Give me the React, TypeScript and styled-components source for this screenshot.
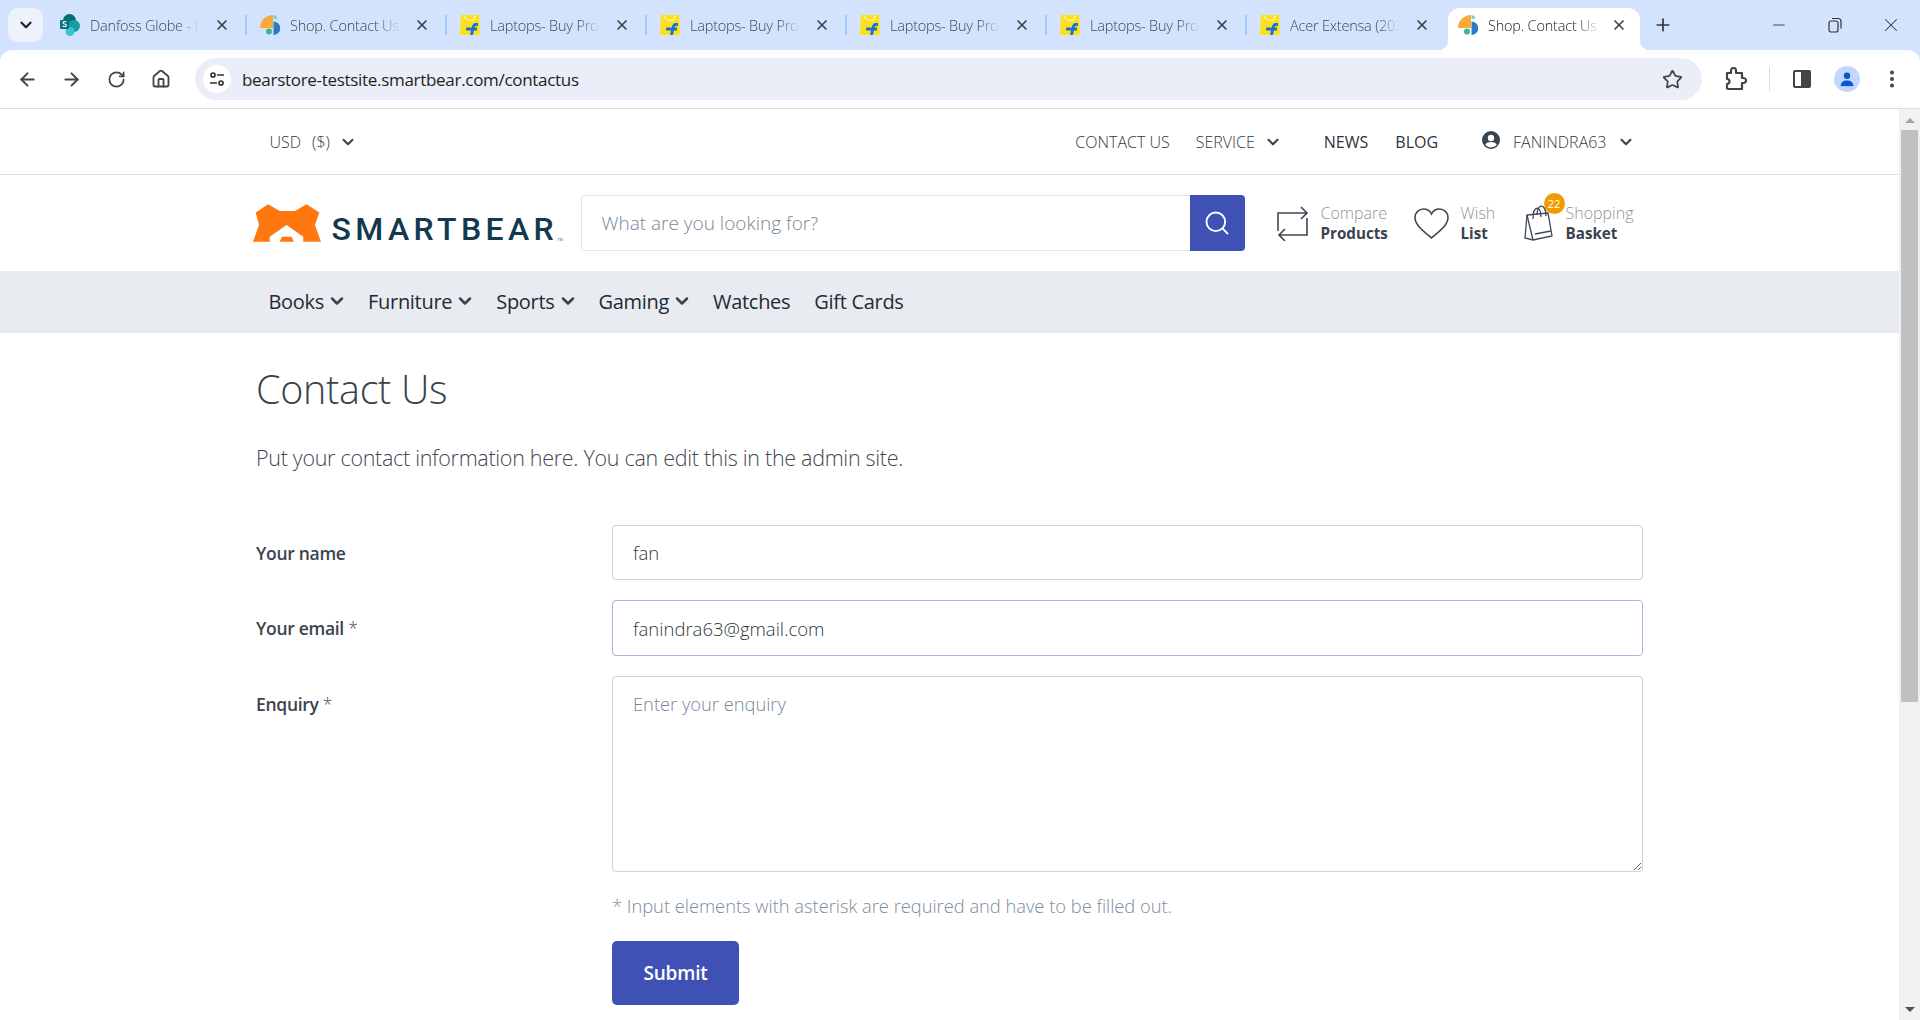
import React from 'react'
import styled, { createGlobalStyle } from 'styled-components'
import { ArrowLeft, ArrowRight, ChevronDown, EllipsisVertical, House, Minus, Plus, RotateCw, Search, Star, X } from 'lucide-react'

const font = `"Open Sans", "Noto Sans", sans-serif`

const GlobalStyle = createGlobalStyle`
  html, body { margin: 0; padding: 0; height: 100%; overflow: hidden; background: #d3e3fd; }
  * { box-sizing: border-box; }
  body { font-family: ${font}; color: #3a444e; }
`

const SharePointIcon = () => (
  <svg width="20" height="22" viewBox="0 0 20 22">
    <circle cx="9.500" cy="6.500" r="6.500" fill="#036c70" />
    <circle cx="14" cy="12" r="6" fill="#1a9ba1" />
    <circle cx="10" cy="17.500" r="4.500" fill="#37c6d0" />
    <rect x="0" y="6" width="9" height="9" rx="1" fill="#03787c" />
    <path d="M6.300 8c-1-.7-3.300-.7-3.300.7 0 1.600 3.400.9 3.400 2.700 0 1.400-2.500 1.400-3.700.7" fill="none" stroke="#fff" strokeWidth="1.100" />
  </svg>
)

const ShopIcon = () => (
  <svg width="20" height="20" viewBox="0 0 20 20">
    <path d="M0 13A13 13 0 0 1 13 0v13z" fill="#f9a93a" />
    <path d="M13.500 0c2 .3 3.500 1.500 4 3.500l-4 .5z" fill="#6fcfd0" />
    <path d="M13.500 6.500a6.700 6.700 0 0 1 0 13.500z" fill="#2f7cc4" />
    <circle cx="9" cy="16.500" r="3" fill="#3fb58a" />
  </svg>
)

const FlipkartIcon = () => (
  <svg width="20" height="20" viewBox="0 0 20 20">
    <path d="M1 0h18l1 20H0z" fill="#ffe11b" />
    <path d="M5 1c.5 6 9.500 6 10 0" fill="none" stroke="#fff6b0" strokeWidth="1.300" />
    <path d="M11.500 20l2-9c.3-1.200 1-1.500 2-1.500H18M6 14h11" fill="none" stroke="#1a6fd6" strokeWidth="2.800" />
  </svg>
)

const BearLogo = () => (
  <svg width="68" height="38" viewBox="40 283 203 112">
    <path
      fillRule="evenodd"
      fill="#ff770f"
      d="M40 395L58 345L48 308L85 283L120 303H165L200 283L238 308L225 345L243 395H190V380L140 345L90 380V395ZM120 395L126 380H155L162 395Z"
    />
  </svg>
)

const tabs = [
  { title: 'Danfoss Globe - Home', icon: <SharePointIcon /> },
  { title: 'Shop. Contact Us', icon: <ShopIcon /> },
  { title: 'Laptops- Buy Products', icon: <FlipkartIcon /> },
  { title: 'Laptops- Buy Products', icon: <FlipkartIcon /> },
  { title: 'Laptops- Buy Products', icon: <FlipkartIcon /> },
  { title: 'Laptops- Buy Products', icon: <FlipkartIcon /> },
  { title: 'Acer Extensa (2023)', icon: <FlipkartIcon /> },
  { title: 'Shop. Contact Us', icon: <ShopIcon />, active: true },
]

const App = () => {
  return (
    <Screen>
      <GlobalStyle />
      <TabStrip>
        <TabSearch><ChevronDown size={18} strokeWidth={3} /></TabSearch>
        {tabs.map((tab, i) => (
          <Tab key={i} $active={tab.active} $hideSep={i >= 6}>
            {tab.icon}
            <TabTitle $active={tab.active}>{tab.title}</TabTitle>
            <TabClose $active={tab.active}><X size={16} strokeWidth={2.500} /></TabClose>
          </Tab>
        ))}
        <NewTab><Plus size={20} strokeWidth={2} /></NewTab>
        <WindowControls>
          <WinButton><Minus size={18} strokeWidth={1.200} /></WinButton>
          <WinButton>
            <svg width="14" height="16" viewBox="0 0 14 16" fill="none" stroke="#333" strokeWidth="1.200">
              <rect x="1" y="4" width="9" height="11" rx="2" />
              <path d="M4 1.500h6a3 3 0 0 1 3 3v7" />
            </svg>
          </WinButton>
          <WinButton><X size={22} strokeWidth={1.100} /></WinButton>
        </WindowControls>
      </TabStrip>

      <Toolbar>
        <ToolIcon><ArrowLeft size={21} strokeWidth={2.200} /></ToolIcon>
        <ToolIcon><ArrowRight size={21} strokeWidth={2.200} /></ToolIcon>
        <ToolIcon><RotateCw size={19} strokeWidth={2.200} /></ToolIcon>
        <ToolIcon><House size={20} strokeWidth={2.200} /></ToolIcon>
        <AddressBar>
          <SiteInfo>
            <svg width="16" height="16" viewBox="0 0 16 16" fill="none" stroke="#333" strokeWidth="1.700">
              <circle cx="4" cy="4" r="2" />
              <path d="M8 4h7M1 12h7" />
              <circle cx="12" cy="12" r="2" />
            </svg>
          </SiteInfo>
          <Url>bearstore-testsite.smartbear.com/contactus</Url>
          <Star size={21} strokeWidth={2} color="#444" />
        </AddressBar>
        <ToolGroup>
          <ExtIcon>
            <svg width="22" height="24" viewBox="0 0 22 24" fill="none" stroke="#444" strokeWidth="2.200" strokeLinejoin="round">
              <path d="M2 6h4V3.500a2.500 2.500 0 0 1 5 0V6h6v5h1.500a2.500 2.500 0 0 1 0 5H17v6H3a1 1 0 0 1-1-1v-4a2.500 2.500 0 0 0 0-5z" />
            </svg>
          </ExtIcon>
          <ToolDivider />
          <PanelIcon><PanelFill /></PanelIcon>
          <Avatar>
            <svg width="18" height="18" viewBox="0 0 18 18" fill="#0b57d0">
              <circle cx="9" cy="5" r="4" />
              <path d="M1 18c0-4.500 3.500-7 8-7s8 2.500 8 7z" />
            </svg>
          </Avatar>
          <DotsIcon><EllipsisVertical size={22} strokeWidth={2.400} /></DotsIcon>
        </ToolGroup>
      </Toolbar>

      <Viewport>
        <Page>
          <TopBar>
            <TopInner>
              <Currency>USD<span>($)</span><Chevron size={18} strokeWidth={2.800} /></Currency>
              <TopLinks>
                <TopLink>CONTACT US</TopLink>
                <TopLink>SERVICE<Chevron size={18} strokeWidth={2.800} /></TopLink>
                <TopLink $strong>NEWS</TopLink>
                <TopLink $strong>BLOG</TopLink>
                <UserLink>
                  <svg width="18" height="18" viewBox="0 0 18 18">
                    <circle cx="9" cy="9" r="9" fill="#3a444e" />
                    <circle cx="9" cy="7" r="3.200" fill="#fff" />
                    <path d="M3.200 14c1-2.400 3.300-3 5.800-3s4.800.6 5.800 3a8 8 0 0 1-11.600 0z" fill="#fff" />
                  </svg>
                  FANINDRA63
                  <Chevron size={18} strokeWidth={2.800} />
                </UserLink>
              </TopLinks>
            </TopInner>
          </TopBar>

          <Header>
            <Logo>
              <BearLogo />
              <LogoText>SMARTBEAR</LogoText>
              <LogoTm>TM</LogoTm>
            </Logo>
            <SearchBox>
              <SearchInput placeholder="What are you looking for?" />
              <SearchButton><Search size={28} strokeWidth={1.600} /></SearchButton>
            </SearchBox>
            <ToolLinks>
              <ToolLink $width={137}>
                <svg width="32" height="36" viewBox="0 0 32 36" fill="none" stroke="#3f4953" strokeWidth="1.600">
                  <path d="M1 26V8h29M24 2l6 6-6 6M30 13v17H2M8 24l-6 6 6 6" />
                </svg>
                <ToolText><small>Compare</small><b>Products</b></ToolText>
              </ToolLink>
              <ToolLink $width={110}>
                <svg width="35" height="31" viewBox="0 0 35 31" fill="none" stroke="#3f4953" strokeWidth="1.600">
                  <path d="M17.500 30C12 25 1 18 1 9.500 1 4.500 5 1 9.500 1c3.500 0 6.500 2 8 5 1.500-3 4.500-5 8-5C30 1 34 4.500 34 9.500 34 18 23 25 17.500 30z" />
                </svg>
                <ToolText><small>Wish</small><b>List</b></ToolText>
              </ToolLink>
              <ToolLink $width={112}>
                <BagWrap>
                  <svg width="30" height="36" viewBox="0 0 30 36" fill="none" stroke="#3f4953" strokeWidth="1.300">
                    <path d="M3 10l21-2 4 23-19 4-8-2z" />
                    <path d="M9 35L3 10M9 14c0-14 8-14 8-2M13 10c0-12 9-12 9 1M11 29l16-3" />
                  </svg>
                  <Badge>22</Badge>
                </BagWrap>
                <ToolText><small>Shopping</small><b>Basket</b></ToolText>
              </ToolLink>
            </ToolLinks>
          </Header>

          <NavBar>
            <NavInner>
              <NavItem>Books<Chevron size={20} strokeWidth={3} /></NavItem>
              <NavItem>Furniture<Chevron size={20} strokeWidth={3} /></NavItem>
              <NavItem>Sports<Chevron size={20} strokeWidth={3} /></NavItem>
              <NavItem>Gaming<Chevron size={20} strokeWidth={3} /></NavItem>
              <NavItem>Watches</NavItem>
              <NavItem>Gift Cards</NavItem>
            </NavInner>
          </NavBar>

          <Content>
            <Title>Contact Us</Title>
            <Lead>Put your contact information here. You can edit this in the admin site.</Lead>
            <Form>
              <Label>Your name</Label>
              <Field value="fan" readOnly />
              <Label>Your email <em>*</em></Label>
              <Field value="fanindra63@gmail.com" readOnly $focused />
              <Label>Enquiry <em>*</em></Label>
              <AreaField placeholder="Enter your enquiry" />
              <span />
              <FormFoot>
                <Note>* Input elements with asterisk are required and have to be filled out.</Note>
                <Submit>Submit</Submit>
              </FormFoot>
            </Form>
          </Content>
        </Page>
        <Scrollbar>
          <ScrollArrow $up />
          <ScrollThumb />
          <ScrollArrow />
        </Scrollbar>
      </Viewport>
    </Screen>
  )
}

export default App

const Screen = styled.div`
  width: 1920px;
  height: 1020px;
  display: flex;
  flex-direction: column;
  overflow: hidden;
`
const TabStrip = styled.div`
  height: 50px;
  display: flex;
  align-items: flex-end;
  padding-left: 8px;
  background: #d3e3fd;
`
const TabSearch = styled.div`
  width: 35px;
  height: 34px;
  margin: 0 1px 8px 0;
  border-radius: 10px;
  background: #edf2fc;
  display: flex;
  align-items: center;
  justify-content: center;
  color: #222;
`
const Tab = styled.div<{ $active?: boolean; $hideSep?: boolean }>`
  position: relative;
  width: ${p => (p.$active ? '192px' : '200px')};
  height: 42px;
  margin-left: ${p => (p.$active ? '4px' : '0')};
  padding: 0 ${p => (p.$active ? '10px' : '14px')} 8px ${p => (p.$active ? '10px' : '16px')};
  display: flex;
  align-items: center;
  border-radius: 12px 12px 0 0;
  background: ${p => (p.$active ? '#fff' : 'transparent')};
  &::after {
    content: '';
    display: ${p => (p.$active || p.$hideSep ? 'none' : 'block')};
    position: absolute;
    right: -3px;
    top: 7px;
    width: 2px;
    height: 20px;
    background: #a8c7fa;
  }
  ${p => p.$active && `
    &::before {
      content: '';
      position: absolute;
      left: -10px;
      right: -10px;
      bottom: 0;
      height: 10px;
      z-index: 0;
      background:
        radial-gradient(circle at 0 0, #d3e3fd 10px, #fff 10.5px) left / 10px 10px no-repeat,
        radial-gradient(circle at 100% 0, #d3e3fd 10px, #fff 10.5px) right / 10px 10px no-repeat;
    }
  `}
  svg { flex: none; position: relative; }
`
const TabTitle = styled.div<{ $active?: boolean }>`
  position: relative;
  width: 112px;
  margin-left: 10px;
  overflow: hidden;
  white-space: nowrap;
  font-size: 14.500px;
  font-weight: 300;
  letter-spacing: -0.2px;
  color: ${p => (p.$active ? '#1f1f1f' : '#45474a')};
  -webkit-mask-image: linear-gradient(to right, #000 80%, transparent);
  mask-image: linear-gradient(to right, #000 80%, transparent);
`
const TabClose = styled.div<{ $active?: boolean }>`
  position: relative;
  margin-left: ${p => (p.$active ? '11px' : '14px')};
  display: flex;
  color: #3c3f43;
`
const NewTab = styled.div`
  margin: 0 0 15px 13px;
  display: flex;
  color: #333;
`
const WindowControls = styled.div`
  margin-left: auto;
  height: 50px;
  display: flex;
  align-items: center;
  padding: 0 18px 0 0;
  gap: 34px;
  color: #333;
`
const WinButton = styled.div`
  width: 22px;
  display: flex;
  align-items: center;
  justify-content: center;
`
const Toolbar = styled.div`
  height: 59px;
  background: #fff;
  border-bottom: 1px solid #dadce0;
  border-radius: 12px 12px 0 0;
  display: flex;
  align-items: center;
`
const ToolIcon = styled.div`
  width: 44.500px;
  flex: none;
  display: flex;
  justify-content: center;
  color: #444;
  &:first-child { margin-left: 5px; }
`
const AddressBar = styled.div`
  width: 1507px;
  height: 42px;
  margin-left: 12px;
  padding: 0 19px 0 8px;
  border-radius: 21px;
  background: #ebeef8;
  display: flex;
  align-items: center;
`
const SiteInfo = styled.div`
  width: 28px;
  height: 28px;
  border-radius: 50%;
  background: #fff;
  display: flex;
  align-items: center;
  justify-content: center;
`
const Url = styled.div`
  flex: 1;
  margin-left: 11px;
  font-size: 17px;
  letter-spacing: -0.3px;
  color: #1f1f1f;
`
const ToolGroup = styled.div`
  display: flex;
  align-items: center;
`
const ExtIcon = styled.div`
  width: 24px;
  margin-left: 23px;
  display: flex;
`
const ToolDivider = styled.div`
  width: 1px;
  height: 24px;
  margin-left: 20px;
  background: #c7dcfb;
`
const PanelIcon = styled.div`
  width: 18px;
  height: 18px;
  margin-left: 23px;
  border: 2px solid #444;
  border-radius: 2px;
  display: flex;
  justify-content: flex-end;
`
const PanelFill = styled.div`
  width: 8px;
  background: #444;
`
const Avatar = styled.div`
  width: 26px;
  height: 26px;
  margin-left: 23px;
  border-radius: 50%;
  background: #c2d7fa;
  display: flex;
  align-items: center;
  justify-content: center;
  overflow: hidden;
  svg { transform: scale(0.8); }
`
const DotsIcon = styled.div`
  margin-left: 21px;
  display: flex;
  color: #444;
`
const Viewport = styled.div`
  flex: 1;
  min-height: 0;
  display: flex;
  background: #fff;
`
const Page = styled.div`
  width: 1899px;
  background: #fff;
`
const TopBar = styled.div`
  height: 66px;
  border-bottom: 1px solid #dee0e2;
`
const TopInner = styled.div`
  width: 1386px;
  height: 65px;
  margin: 0 auto;
  padding: 0 8px 0 13px;
  display: flex;
  align-items: center;
  justify-content: space-between;
  font-size: 16px;
  font-weight: 300;
  color: #2f3942;
`
const Chevron = styled(ChevronDown)`
  flex: none;
  color: #3a444e;
`
const Currency = styled.div`
  display: flex;
  align-items: center;
  span { margin: 0 9px 0 11px; }
`
const TopLinks = styled.div`
  display: flex;
  align-items: center;
`
const TopLink = styled.div<{ $strong?: boolean }>`
  display: flex;
  align-items: center;
  gap: 9px;
  margin-right: 26px;
  font-weight: ${p => (p.$strong ? 500 : 300)};
  color: ${p => (p.$strong ? '#2b343c' : '#2f3942')};
  &:nth-child(2) { margin-right: 42px; }
  &:nth-child(3) { margin-right: 27px; }
  &:nth-child(4) { margin-right: 44px; }
`
const UserLink = styled.div`
  display: flex;
  align-items: center;
  gap: 13px;
  svg:first-child { margin-top: -3px; }
  svg:last-child { margin-left: -3px; }
`
const Header = styled.div`
  width: 1386px;
  height: 96px;
  margin: 0 auto;
  display: flex;
  align-items: center;
`
const Logo = styled.div`
  width: 325px;
  margin-left: -4px;
  display: flex;
  align-items: flex-end;
  padding-bottom: 1px;
`
const LogoText = styled.div`
  margin-left: 11px;
  font-family: Roboto, sans-serif;
  font-size: 32px;
  line-height: 26px;
  font-weight: 500;
  letter-spacing: 4.400px;
  color: #12394f;
`
const LogoTm = styled.div`
  margin-left: -1px;
  font-size: 4px;
  color: #666;
`
const SearchBox = styled.div`
  width: 664px;
  height: 56px;
  margin-left: 3px;
  display: flex;
`
const SearchInput = styled.input`
  flex: 1;
  min-width: 0;
  padding: 0 20px;
  border: 1px solid #e2e5e9;
  border-right: 0;
  border-radius: 4px 0 0 4px;
  outline: 0;
  font-family: ${font};
  font-size: 19px;
  font-weight: 300;
  &::placeholder { color: #75879a; opacity: 1; }
`
const SearchButton = styled.div`
  width: 55px;
  border-radius: 0 4px 4px 0;
  background: #3f51b5;
  color: #fff;
  display: flex;
  align-items: center;
  justify-content: center;
`
const ToolLinks = styled.div`
  margin-left: 32px;
  display: flex;
  align-items: center;
`
const ToolLink = styled.div<{ $width: number }>`
  width: ${p => p.$width}px;
  display: flex;
  align-items: center;
  gap: 12px;
`
const ToolText = styled.div`
  display: flex;
  flex-direction: column;
  font-size: 15.200px;
  line-height: 20px;
  small { font-size: 16px; font-weight: 300; color: #8f949a; }
  b { font-weight: 700; color: #3a444e; }
`
const BagWrap = styled.div`
  position: relative;
  display: flex;
`
const Badge = styled.div`
  position: absolute;
  top: -12px;
  right: -11px;
  width: 21px;
  height: 21px;
  border-radius: 50%;
  background: #f09c00;
  color: #fff;
  font-size: 11px;
  display: flex;
  align-items: center;
  justify-content: center;
`
const NavBar = styled.div`
  height: 62px;
  background: #e8ebf0;
`
const NavInner = styled.div`
  width: 1386px;
  height: 100%;
  margin: 0 auto;
  padding: 0 0 2px 12px;
  display: flex;
  align-items: center;
  gap: 21px;
`
const NavItem = styled.div`
  display: flex;
  align-items: center;
  gap: 3px;
  font-size: 20px;
  font-weight: 500;
  letter-spacing: -0.3px;
  color: #212b36;
  &:nth-child(6) { margin-left: 3px; }
`
const Content = styled.div`
  width: 1387px;
  margin: 0 auto;
`
const Title = styled.h1`
  margin: 32px 0 0;
  font-size: 39.500px;
  line-height: 48px;
  font-weight: 300;
  letter-spacing: -0.3px;
  color: #38424c;
`
const Lead = styled.p`
  margin: 31px 0 0;
  font-size: 21.500px;
  line-height: 28px;
  font-weight: 300;
  letter-spacing: -0.3px;
  color: #3f4953;
`
const Form = styled.div`
  margin-top: 53px;
  display: grid;
  grid-template-columns: 356px 1031px;
  row-gap: 20px;
`
const Label = styled.div`
  padding-top: 16px;
  font-size: 17.500px;
  line-height: 24px;
  font-weight: 600;
  letter-spacing: -0.3px;
  color: #3a444e;
  em { font-style: normal; font-weight: 300; }
`
const Field = styled.input<{ $focused?: boolean }>`
  width: 100%;
  height: ${p => (p.$focused ? '56px' : '55px')};
  padding: 0 20px;
  border: 1px solid ${p => (p.$focused ? '#a9b3e2' : '#ced3dc')};
  border-radius: 4px;
  outline: 0;
  font-family: ${font};
  font-size: 18.500px;
  font-weight: 300;
  color: #2f3942;
`
const AreaField = styled.textarea`
  width: 100%;
  height: 196px;
  padding: 15px 20px;
  border: 1px solid #ced3dc;
  border-radius: 4px;
  outline: 0;
  display: block;
  font-family: ${font};
  font-size: 18.300px;
  line-height: 24px;
  font-weight: 300;
  &::placeholder { color: #75879a; opacity: 1; }
`
const FormFoot = styled.div`
  display: flex;
  flex-direction: column;
  align-items: flex-start;
`
const Note = styled.div`
  font-size: 18.300px;
  line-height: 28px;
  font-weight: 300;
  color: #7d8d9d;
`
const Submit = styled.button`
  width: 127px;
  height: 64px;
  margin-top: 21px;
  padding: 0;
  border: 0;
  border-radius: 5px;
  background: #3f51b5;
  color: #fff;
  font-family: ${font};
  font-size: 19px;
  font-weight: 600;
  letter-spacing: -0.2px;
`
const Scrollbar = styled.div`
  width: 21px;
  background: #f1f1f1;
  display: flex;
  flex-direction: column;
  align-items: center;
`
const ScrollThumb = styled.div`
  width: 17px;
  height: 572px;
  margin-top: 7px;
  background: #c1c1c1;
`
const ScrollArrow = styled.div<{ $up?: boolean }>`
  width: 0;
  height: 0;
  border-left: 5px solid transparent;
  border-right: 5px solid transparent;
  ${p => (p.$up
    ? 'margin-top: 9px; border-bottom: 5px solid #a3a3a3;'
    : 'margin-top: auto; margin-bottom: 8px; border-top: 5px solid #505050;')}
`
